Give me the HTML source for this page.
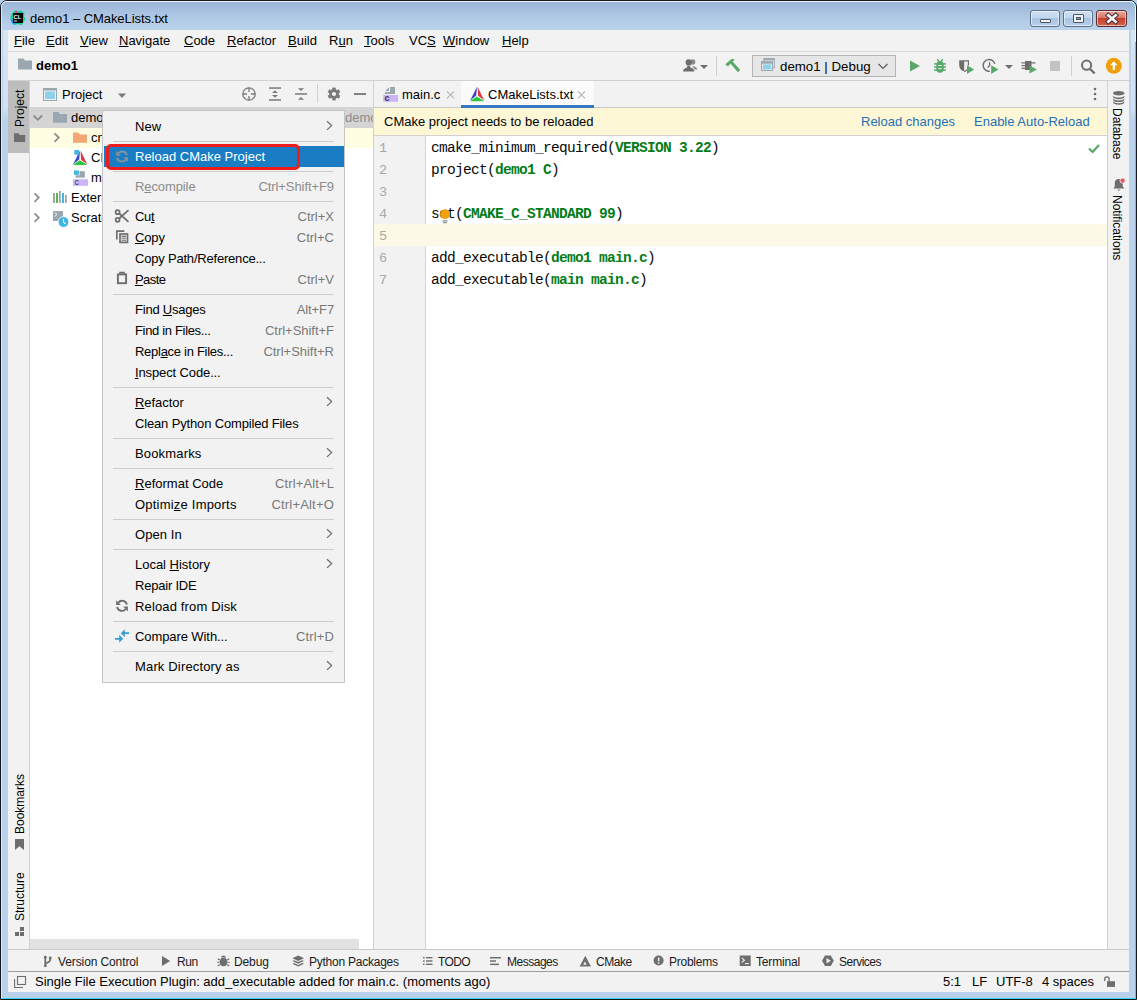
<!DOCTYPE html>
<html><head><meta charset="utf-8"><title>demo1 – CMakeLists.txt</title>
<style>
*{box-sizing:border-box;margin:0;padding:0}
html,body{width:1137px;height:1000px;overflow:hidden;background:#b9d1ea}
body{font-family:"Liberation Sans",sans-serif;font-size:13px;color:#000;position:relative}
.abs{position:absolute}
.t{position:absolute;white-space:nowrap;line-height:1}
u{text-decoration:underline;text-underline-offset:1px}
/* window frame */
#frame{position:absolute;left:0;top:0;width:1137px;height:1000px;border-radius:7px 7px 0 0;background:linear-gradient(#99b5d6 0,#a9c3e1 12px,#b8cfe9 24px,#bbd2ec 30px,#b9d1ea 100%);border:1px solid #15181d}
#frame:before{content:"";position:absolute;left:0;top:0;right:0;bottom:0;border:1px solid #35d6f7;border-top-color:#eef4fb;border-left-color:#dbe8f6;border-radius:6px 6px 0 0}
#frame:after{content:"";position:absolute;left:1px;top:1px;right:0;height:40px;border-right:1px solid #eef4fb;border-radius:0 6px 0 0}
.fl{position:absolute;top:30px;height:92px;background:linear-gradient(#d6e4f4,#d0e0f2 85%,#b9d1ea)}
#client{position:absolute;left:8px;top:30px;width:1121px;height:962px;background:#f2f2f2}
.mi{position:absolute;top:3px;font-size:13px;line-height:15px}
.hl{position:absolute;background:#d1d1d1}
/* context menu */
#menu{position:absolute;left:102px;top:110px;width:243px;height:573px;background:#f2f2f2;border:1px solid #c4c4c4;font-size:13px}
#menu .it{position:absolute;left:1px;width:240px;height:21px;line-height:21px}
#menu .it .l{position:absolute;left:31px;top:0;white-space:nowrap}
#menu .it .s{position:absolute;right:10px;top:0;color:#787878;white-space:nowrap}
#menu .sep{position:absolute;left:10px;width:221px;height:1px;background:#cdcdcd}
#menu .arr{position:absolute;right:10px;top:5px}
.code{position:absolute;left:431px;margin-top:1px;font-family:"Liberation Mono",monospace;font-size:14.5px;letter-spacing:-0.7px;line-height:22px;white-space:pre;color:#080808}
.code b{color:#067d17;font-weight:bold}
.ln{position:absolute;left:379px;margin-top:2px;font-family:"Liberation Mono",monospace;font-size:13.5px;line-height:22px;color:#a8a8a8}
.tree{position:absolute;font-size:13px;line-height:20px;white-space:nowrap}
.bt{position:absolute;top:955px;font-size:12px;line-height:14px;white-space:nowrap;color:#1a1a1a}
.vt{position:absolute;font-size:12px;line-height:14px;white-space:nowrap;transform-origin:0 0}
.wb{border:1px solid #5b6f8c;border-radius:3px;background:linear-gradient(#cfdff2 0,#c2d6ee 45%,#a9c3e3 50%,#b8cfea 100%);box-shadow:inset 0 0 0 1px rgba(255,255,255,.55)}
.wc{border-color:#5c2b2b;background:linear-gradient(#e9a99b 0,#d9776a 45%,#c4402f 50%,#d2654f 100%)}
</style></head><body>
<div id="frame"></div>
<div class="fl" style="left:3px;width:5px"></div><div class="fl" style="left:1131px;width:4px"></div>
<!-- title -->
<div class="t" style="left:30px;top:12px;font-size:13px;letter-spacing:-0.07px">demo1 – CMakeLists.txt</div>
<div id="client"></div>
<!-- menubar -->
<div class="abs" style="left:8px;top:30px;width:1121px;height:21px">
<span class="mi" style="left:6px"><u>F</u>ile</span>
<span class="mi" style="left:38px"><u>E</u>dit</span>
<span class="mi" style="left:72px"><u>V</u>iew</span>
<span class="mi" style="left:111px"><u>N</u>avigate</span>
<span class="mi" style="left:176px"><u>C</u>ode</span>
<span class="mi" style="left:219px"><u>R</u>efactor</span>
<span class="mi" style="left:280px"><u>B</u>uild</span>
<span class="mi" style="left:321px">R<u>u</u>n</span>
<span class="mi" style="left:356px"><u>T</u>ools</span>
<span class="mi" style="left:401px">VC<u>S</u></span>
<span class="mi" style="left:435px"><u>W</u>indow</span>
<span class="mi" style="left:494px"><u>H</u>elp</span>
</div>
<div class="hl" style="left:8px;top:51px;width:1121px;height:1px;background:#d9d9d9"></div>
<!-- navbar -->
<div class="t" style="left:36px;top:59px;font-size:13px;font-weight:bold">demo1</div>
<div class="hl" style="left:8px;top:80px;width:1121px;height:1px"></div>

<!-- app icon -->
<svg class="abs" style="left:9px;top:9px" width="18" height="18" viewBox="0 0 18 18">
<defs><linearGradient id="cl1" x1="0" y1="0" x2="1" y2="1"><stop offset="0" stop-color="#21d789"/><stop offset=".5" stop-color="#10c9a0"/><stop offset="1" stop-color="#009ae5"/></linearGradient></defs>
<path d="M2 5 L6 1.5 L9 2 L12 1.5 L15.5 4 L15 8 L16.5 10 L14 13 L13 16 L9 15 L5 16 L2.5 13.5 L1.3 9 Z" fill="url(#cl1)"/>
<path d="M6.3 1.3 L8.6 2.4 L7 5 Z" fill="#ed358c"/>
<path d="M1.3 9 L3 14 L6 16 L7 12 Z" fill="#1ea0ee"/>
<path d="M10 13 L15.5 8 L16.5 10 L14 13 L13 16 L9.5 15.5Z" fill="#14e07a"/>
<rect x="4" y="4" width="10" height="10" fill="#000"/>
<text x="4.6" y="9.6" font-family="Liberation Sans,sans-serif" font-size="5.8" font-weight="bold" fill="#fff">CL</text>
<rect x="5" y="11.6" width="3.2" height="0.9" fill="#fff"/>
</svg>
<!-- window buttons -->
<div class="abs wb" style="left:1030px;top:10px;width:30px;height:17px"></div>
<div class="abs wb" style="left:1063px;top:10px;width:30px;height:17px"></div>
<div class="abs wb wc" style="left:1096px;top:10px;width:31px;height:17px"></div>
<div class="abs" style="left:1040px;top:19px;width:11px;height:4px;background:#f4f4f4;border:1px solid #4a5568;border-radius:1px"></div>
<div class="abs" style="left:1073px;top:14px;width:11px;height:9px;background:#f4f4f4;border:1px solid #4a5568;border-radius:1px"></div>
<div class="abs" style="left:1076px;top:17px;width:5px;height:3px;background:#7b9bc4;border:1px solid #4a5568"></div>
<svg class="abs" style="left:1104px;top:12px" width="16" height="13" viewBox="0 0 16 13"><path d="M4.300 3.300L11.700 9.700M11.700 3.300L4.300 9.700" stroke="#47313a" stroke-width="4.600" stroke-linecap="square"/><path d="M4.300 3.300L11.700 9.700M11.700 3.300L4.300 9.700" stroke="#f4f4f4" stroke-width="2.600" stroke-linecap="square"/></svg>
<!-- nav folder -->
<svg class="abs" style="left:17px;top:58px" width="16" height="12" viewBox="0 0 16 12"><path d="M1 0.5h5.5l1.5 2h7v9H1z" fill="#9aa7b0"/></svg>
<!-- toolbar icons -->
<svg class="abs" style="left:680px;top:54px" width="448" height="24" viewBox="680 54 448 24">
<!-- user -->
<g fill="#6e6e6e"><circle cx="692.600" cy="62" r="2.700" opacity=".8"/><path d="M692 66.300q5 .200 5.300 3.200l-2.500 0z" opacity=".8"/><circle cx="688.700" cy="62.400" r="3.100"/><path d="M683 71.600q0-2.600 3.300-3.800l1-.500v-1.500h2.800v1.500l1 .500q3.300 1.200 3.300 3.800z"/></g>
<path d="M700 65h8l-4 4z" fill="#6e6e6e"/>
<rect x="716" y="56" width="1" height="20" fill="#cfcfcf"/>
<!-- hammer -->
<g fill="#59a869"><path d="M725.300 64.300l6.200-5.300l3.300.200l-1.300 1.600l-5.700 5.700z"/><path d="M730.300 63.300l2.100-2.100l7.800 8.900l-2.300 2.200z"/></g>
<!-- combo -->
<rect x="752.5" y="55.5" width="143" height="21" fill="#e6e6e6" stroke="#b4b4b4"/>
<rect x="764" y="58.800" width="10.300" height="9" fill="#e6e6e6" stroke="#9aa7b0"/><rect x="763.500" y="58.300" width="11.300" height="2" fill="#9aa7b0"/>
<rect x="761.500" y="61.800" width="11" height="8.700" fill="#e6e6e6" stroke="#9aa7b0"/><rect x="761" y="61.300" width="12" height="2.400" fill="#9aa7b0"/><rect x="763" y="64.500" width="8" height="4.800" fill="#8fd0ea"/>
<text x="780" y="70.5" font-family="Liberation Sans,sans-serif" font-size="13.3" fill="#000">demo1 | Debug</text>
<path d="M878.5 64 l4.5 4.5 l4.5-4.5" fill="none" stroke="#5a5a5a" stroke-width="1.2"/>
<!-- run -->
<path d="M910 60.5 v11 l10-5.5z" fill="#59a869"/>
<!-- debug bug -->
<g fill="#59a869"><path d="M936.300 65q0-4 3.700-4t3.700 4v4q0 3.800-3.700 3.800t-3.700-3.800z"/><rect x="934" y="63.200" width="12" height="1.400"/><rect x="934" y="66.300" width="12" height="1.400"/><rect x="934" y="69.400" width="12" height="1.400"/>
<path d="M937.200 59.200l1.800 2.300M942.800 59.200l-1.800 2.300" stroke="#59a869" stroke-width="1.400" fill="none"/></g>
<g fill="#f2f2f2"><rect x="938.200" y="65" width="3.600" height="1"/><rect x="938.200" y="68.100" width="3.600" height="1"/></g>
<!-- coverage -->
<path d="M959.200 60.300h5v11.300q-5-1.700-5-6.600z" fill="#6e6e6e"/><path d="M964 60.900h4.400v4.500" fill="none" stroke="#6e6e6e" stroke-width="1.200"/><path d="M964.200 71.600q2-.600 3-2" fill="none" stroke="#6e6e6e" stroke-width="1.200"/>
<path d="M967 65.300v8.600l7.200-4.300z" fill="#59a869"/>
<!-- profiler -->
<path d="M989.800 71.200a5.900 5.900 0 1 1 5-7.300" fill="none" stroke="#6e6e6e" stroke-width="1.400"/><path d="M989.600 62.300v3.200l-1.900 2.200" fill="none" stroke="#6e6e6e" stroke-width="1.300"/>
<path d="M991.200 65.300v8.600l7.200-4.300z" fill="#59a869"/>
<path d="M1005 65h8l-4 4z" fill="#6e6e6e"/>
<!-- valgrind-ish -->
<g fill="#6e6e6e"><rect x="1025" y="61" width="6.500" height="9"/><rect x="1021.500" y="62.300" width="4" height="1.200"/><rect x="1021.500" y="65" width="4" height="1.200"/><rect x="1021.500" y="67.700" width="4" height="1.200"/><rect x="1031" y="62.300" width="4.500" height="1.200"/></g>
<path d="M1029.500 65.500 v8 l7.500-4z" fill="#59a869"/>
<!-- stop -->
<rect x="1050" y="61" width="10" height="10" fill="#c2c2c2"/>
<rect x="1071" y="56" width="1" height="20" fill="#cfcfcf"/>
<!-- search -->
<circle cx="1086.600" cy="65.200" r="4.600" fill="none" stroke="#6e6e6e" stroke-width="2"/><path d="M1089.900 68.700 l4.700 4.700" stroke="#6e6e6e" stroke-width="2.300"/>
<!-- update -->
<circle cx="1113.800" cy="65.800" r="8" fill="#f0a00c"/><path d="M1113.800 61.300 l3.700 4 h-2.600 v4.700 h-2.200 v-4.700 h-2.600z" fill="#fff"/>
</svg>

<!-- left stripe -->
<div class="abs" style="left:8px;top:81px;width:21px;height:868px;background:#f2f2f2"></div>
<div class="abs" style="left:8px;top:81px;width:21px;height:72px;background:#bdbdbd"></div>
<div class="hl" style="left:29px;top:81px;width:1px;height:868px"></div>

<div class="vt" style="left:13px;top:127px;transform:rotate(-90deg)">Project</div>
<div class="vt" style="left:13px;top:834px;transform:rotate(-90deg)">Bookmarks</div>
<div class="vt" style="left:13px;top:921px;transform:rotate(-90deg)">Structure</div>
<svg class="abs" style="left:8px;top:81px" width="21" height="869" viewBox="8 81 21 869">
<path d="M14 133.200h4.500l1.300 1.800h5.400v7H14z" fill="#6e6e6e"/>
<path d="M15 839h9v11l-4.500-3.800l-4.500 3.800z" fill="#6e6e6e"/>
<g fill="#6e6e6e"><rect x="20" y="927" width="4" height="4"/><rect x="15" y="932" width="4" height="4"/><rect x="20" y="932" width="4" height="4"/></g>
</svg>
<div class="vt" style="left:1124px;top:108px;transform:rotate(90deg)">Database</div>
<div class="vt" style="left:1124px;top:195px;transform:rotate(90deg)">Notifications</div>
<svg class="abs" style="left:1108px;top:81px" width="21" height="200" viewBox="1108 81 21 200">
<g fill="#6e6e6e"><ellipse cx="1118.700" cy="93.200" rx="5.600" ry="2.300"/><path d="M1113.100 95.300v1.600a5.600 2.300 0 0 0 11.200 0v-1.600a5.600 2.300 0 0 1-11.200 0zM1113.100 98.200v1.600a5.600 2.300 0 0 0 11.200 0v-1.600a5.600 2.300 0 0 1-11.200 0zM1113.100 101.100v-.1v0a5.600 2.300 0 0 0 11.200 0a5.600 2.300 0 0 1-11.200 0z"/><path d="M1113.100 99.500v1.500a5.600 2.200 0 0 0 11.200 0v-1.500a5.600 2.200 0 0 1-11.200 0z" transform="translate(0 1.500)"/></g>
<path d="M1113.300 188.500l1.500-2v-3.500a4 4 0 0 1 8 0v3.500l1.500 2zM1117.300 189.500h3l-1.500 1.600z" fill="#6e6e6e"/>
<circle cx="1122.600" cy="180.600" r="2.600" fill="#e55765" stroke="#f2f2f2" stroke-width=".8"/>
</svg>

<!-- project panel -->
<div class="abs" style="left:30px;top:81px;width:343px;height:26px;background:#f2f2f2"></div>
<div class="t" style="left:62px;top:88px;font-size:13px">Project</div>
<div class="abs" style="left:30px;top:107px;width:343px;height:842px;background:#fff"></div>
<div class="abs" style="left:30px;top:107px;width:343px;height:21px;background:#d4d4d4"></div>
<div class="abs" style="left:30px;top:128px;width:343px;height:20px;background:#fffde2"></div>
<div class="abs" style="left:30px;top:939px;width:329px;height:10px;background:#e2e2e2"></div>
<div class="tree" style="left:71px;top:108px">demo1</div>
<div class="tree" style="left:345px;top:108px;color:#8c8c8c">demo1</div>
<div class="tree" style="left:91px;top:128px">cmake-build-debug</div>
<div class="tree" style="left:91px;top:148px">CMakeLists.txt</div>
<div class="tree" style="left:91px;top:168px">main.c</div>
<div class="tree" style="left:71px;top:188px">External Libraries</div>
<div class="tree" style="left:71px;top:208px">Scratches and Consoles</div>

<svg class="abs" style="left:30px;top:81px" width="343" height="150" viewBox="30 81 343 150">
<!-- header icons -->
<rect x="43.500" y="88.500" width="13" height="12" fill="#f2f2f2" stroke="#9aa7b0"/><rect x="43" y="88" width="14" height="2.500" fill="#9aa7b0"/><rect x="45" y="91.500" width="10" height="7.500" fill="#8fd0ea"/>
<path d="M118 93.500h8l-4 4.500z" fill="#7a7a7a"/>
<g stroke="#7a7a7a" fill="none" stroke-width="1.300"><circle cx="249" cy="94" r="6.200"/><path d="M249 87.800v4.200M249 96v4.200M242.800 94h4.200M251 94h4.200"/></g>
<g fill="#7a7a7a"><rect x="269" y="87.300" width="12" height="1.500"/><rect x="269" y="99.200" width="12" height="1.500"/><path d="M272 93l3-2.800l3 2.800zM272 95l3 2.800l3-2.800z"/>
<rect x="295" y="93.200" width="12" height="1.500"/><path d="M298 88.300h6l-3 2.800zM298 99.700h6l-3-2.800z"/>
<rect x="317" y="84" width="1" height="19" fill="#cfcfcf"/>
<rect x="354" y="93.100" width="12" height="1.900"/></g>
<g transform="translate(334 94)"><g fill="#7a7a7a"><circle r="4.900"/><g id="gt"><rect x="-1.700" y="-6.400" width="3.400" height="3"/><rect x="-1.700" y="3.400" width="3.400" height="3"/></g><use href="#gt" transform="rotate(60)"/><use href="#gt" transform="rotate(120)"/></g><circle r="2.100" fill="#f2f2f2"/></g>
<!-- row1 -->
<path d="M33.500 115.500l4.300 4.300l4.300-4.300" fill="none" stroke="#8c8c8c" stroke-width="1.800"/>
<path d="M53 112h5.300l1.600 2h7.100v8.800H53z" fill="#9aa7b0"/>
<!-- row2 -->
<path d="M54.500 133.300l4.300 4.300l-4.300 4.300" fill="none" stroke="#8c8c8c" stroke-width="1.700"/>
<path d="M73 132.500h5.300l1.600 2h7.100v8.300H73z" fill="#f4a674"/>
<!-- row3 cmake -->
<path d="M80 150.400l-.800 9.100l-6.200 5z" fill="#3c46c8"/><path d="M80.600 150.400l6.700 14l-6.300-4.700z" fill="#dc3c46"/><path d="M73 165l6.800-4.700l7.500 4.700z" fill="#28c83c"/>
<rect x="74.300" y="150" width="4.700" height="4.700" fill="#40b6e0"/>
<!-- row4 c file -->
<rect x="75.500" y="171.200" width="9.300" height="6.500" fill="#9aa7b0"/><rect x="73.500" y="169.900" width="6" height="5.400" fill="#fff"/><rect x="74" y="170.400" width="4.900" height="4.400" fill="#40b6e0"/><rect x="73" y="179.200" width="15" height="6.600" fill="#cdb5f5"/>
<text x="74.800" y="185.100" font-family="Liberation Sans,sans-serif" font-size="8.500" fill="#40364a">c</text>
<!-- row5 -->
<path d="M34.500 193.300l4.300 4.300l-4.300 4.300" fill="none" stroke="#8c8c8c" stroke-width="1.700"/>
<g><rect x="53" y="193" width="2" height="10" fill="#9aa7b0"/><rect x="56" y="193" width="2" height="10" fill="#62b543"/><rect x="59" y="191" width="1.800" height="12" fill="#9aa7b0"/><rect x="62" y="193" width="2" height="10" fill="#40b6e0"/><rect x="65" y="195" width="1.800" height="8" fill="#9aa7b0"/></g>
<!-- row6 -->
<path d="M34.500 213.300l4.300 4.300l-4.300 4.300" fill="none" stroke="#8c8c8c" stroke-width="1.700"/>
<path d="M53 211h10v5.500l-4 4.500h-6z" fill="#9aa7b0"/><path d="M54.500 212.500l2.500 2l-2.500 2" fill="none" stroke="#f2f2f2" stroke-width="1"/>
<circle cx="63.500" cy="222" r="5.400" fill="#40b6e0" stroke="#fff" stroke-width=".8"/><path d="M63.500 218.800v3.400l2 1.500" fill="none" stroke="#fff" stroke-width="1.100"/>
</svg>

<div class="hl" style="left:373px;top:81px;width:1px;height:868px"></div>
<!-- editor -->
<div class="abs" style="left:374px;top:81px;width:734px;height:26px;background:#f2f2f2"></div>
<div class="abs" style="left:461px;top:81px;width:133px;height:26px;background:#fbfbfb"></div>
<div class="hl" style="left:374px;top:107px;width:734px;height:1px;background:#c9c9c9"></div>
<div class="abs" style="left:461px;top:105px;width:133px;height:3px;background:#3778c3"></div>
<div class="t" style="left:402px;top:88px;font-size:13px">main.c</div>
<div class="t" style="left:488px;top:88px;font-size:13px">CMakeLists.txt</div>
<!-- banner -->
<div class="abs" style="left:374px;top:108px;width:734px;height:27px;background:#fef7d6"></div>
<div class="hl" style="left:374px;top:135px;width:734px;height:1px"></div>
<div class="t" style="left:384px;top:115px;font-size:13px">CMake project needs to be reloaded</div>
<div class="t" style="left:861px;top:115px;font-size:13px;color:#2470b3">Reload changes</div>
<div class="t" style="left:974px;top:115px;font-size:13px;color:#2470b3">Enable Auto-Reload</div>
<!-- editor body -->
<div class="abs" style="left:374px;top:136px;width:734px;height:813px;background:#fff"></div>
<div class="abs" style="left:374px;top:136px;width:52px;height:813px;background:#f2f2f2"></div>
<div class="hl" style="left:425px;top:136px;width:1px;height:813px;background:#d4d4d4"></div>
<div class="abs" style="left:374px;top:224px;width:733px;height:22px;background:#fcfae6"></div>
<div class="hl" style="left:1107px;top:81px;width:1px;height:868px"></div>
<div class="ln" style="top:136px">1</div><div class="ln" style="top:158px">2</div><div class="ln" style="top:180px">3</div><div class="ln" style="top:202px">4</div><div class="ln" style="top:224px">5</div><div class="ln" style="top:246px">6</div><div class="ln" style="top:268px">7</div>
<div class="code" style="top:136px">cmake_minimum_required(<b>VERSION 3.22</b>)</div>
<div class="code" style="top:158px">project(<b>demo1 C</b>)</div>
<div class="code" style="top:202px">set(<b>CMAKE_C_STANDARD 99</b>)</div>
<div class="code" style="top:246px">add_executable(<b>demo1 main.c</b>)</div>
<div class="code" style="top:268px">add_executable(<b>main main.c</b>)</div>

<svg class="abs" style="left:374px;top:81px" width="734" height="150" viewBox="374 81 734 150">
<!-- main.c icon -->
<path d="M390 87h5v6.900h-10v-1.900h5z" fill="#9aa7b0"/><path d="M389 87.200v3.800h-3.800z" fill="#9aa7b0"/><rect x="383.200" y="95" width="14.800" height="6.800" fill="#cdb5f5"/>
<text x="384.600" y="101" font-family="Liberation Sans,sans-serif" font-size="9" font-weight="bold" fill="#40364a">c</text>
<path d="M447 91.300l7 7M454 91.300l-7 7" stroke="#b4b4b4" stroke-width="1.100"/>
<!-- cmake icon -->
<path d="M477 86.800l-.800 8.700l-6.200 5.200z" fill="#3c46c8"/><path d="M477.600 86.800l6.700 13.700l-6.300-4.700z" fill="#dc3c46"/><path d="M470 101.200l6.800-4.700l7.500 4.700z" fill="#28c83c"/>
<path d="M578 91.300l7 7M585 91.300l-7 7" stroke="#b4b4b4" stroke-width="1.100"/>
<!-- dots -->
<g fill="#6e6e6e"><circle cx="1095" cy="89" r="1.300"/><circle cx="1095" cy="94" r="1.300"/><circle cx="1095" cy="99" r="1.300"/></g>
<!-- check -->
<path d="M1089 148.500l3.600 3.500l6.400-7" fill="none" stroke="#59a869" stroke-width="2.200"/>
<!-- bulb -->
<circle cx="445" cy="214.200" r="4.900" fill="#f0a00c"/><rect x="442.300" y="220.400" width="5.400" height="1" fill="#7a7a7a"/><rect x="443" y="222.200" width="4" height="1" fill="#7a7a7a"/>
</svg>

<!-- right stripe -->
<!-- bottom bars -->
<div class="hl" style="left:8px;top:949px;width:1121px;height:1px;background:#c9c9c9"></div>
<div class="abs" style="left:8px;top:950px;width:1121px;height:21px;background:#f2f2f2"></div>
<div class="hl" style="left:8px;top:971px;width:1121px;height:1px;background:#9c9c9c"></div>
<div class="abs" style="left:8px;top:972px;width:1121px;height:20px;background:#f2f2f2"></div>
<div class="bt" style="letter-spacing:-0.110px;left:58px">Version Control</div>
<div class="bt" style="letter-spacing:-0.472px;left:177px">Run</div>
<div class="bt" style="letter-spacing:-0.115px;left:234px">Debug</div>
<div class="bt" style="letter-spacing:-0.240px;left:309px">Python Packages</div>
<div class="bt" style="letter-spacing:-0.613px;left:438px">TODO</div>
<div class="bt" style="letter-spacing:-0.488px;left:507px">Messages</div>
<div class="bt" style="letter-spacing:-0.443px;left:596px">CMake</div>
<div class="bt" style="letter-spacing:-0.248px;left:669px">Problems</div>
<div class="bt" style="letter-spacing:-0.170px;left:756px">Terminal</div>
<div class="bt" style="letter-spacing:-0.502px;left:839px">Services</div>
<div class="t" style="left:35px;top:975px;font-size:13px">Single File Execution Plugin: add_executable added for main.c. (moments ago)</div>
<div class="t" style="left:943px;top:975px;font-size:13px">5:1</div>
<div class="t" style="left:972px;top:975px;font-size:13px">LF</div>
<div class="t" style="left:996px;top:975px;font-size:13px">UTF-8</div>
<div class="t" style="left:1042px;top:975px;font-size:13px">4 spaces</div>

<svg class="abs" style="left:8px;top:951px" width="1121" height="41" viewBox="8 951 1121 41">
<!-- vcs -->
<g fill="none" stroke="#6e6e6e" stroke-width="1.800"><path d="M45.300 957v9"/><path d="M50.200 958v1.500q0 2.500-4.900 4"/></g><g fill="#6e6e6e"><circle cx="45.300" cy="957.200" r="1.400"/><circle cx="45.300" cy="965.800" r="1.400"/><circle cx="50.200" cy="958" r="1.400"/></g>
<!-- run -->
<path d="M162 956v10l8.200-5z" fill="#6e6e6e"/>
<!-- debug -->
<g fill="#6e6e6e"><ellipse cx="223.500" cy="962" rx="3.700" ry="4.300"/><path d="M221 957.600q.3-2 2.500-2t2.500 2z"/><path d="M220 960l-2.300-1.300M227 960l2.300-1.300M219.700 962.300h-2.500M227.300 962.300h2.500M220 964.500l-2.300 1.500M227 964.500l2.300 1.500" stroke="#6e6e6e" stroke-width="1.100"/></g>
<!-- python packages -->
<g fill="#6e6e6e"><path d="M298.200 955.500l5.800 2.700l-5.800 2.700l-5.800-2.700z"/><path d="M292.400 961l1.700-.8l4.100 1.900l4.100-1.900l1.700.8l-5.800 2.700z"/><path d="M292.400 963.800l1.700-.8l4.100 1.900l4.100-1.900l1.700.8l-5.800 2.700z"/></g>
<!-- todo -->
<g fill="#6e6e6e"><rect x="423" y="957" width="1.600" height="1.400"/><rect x="426" y="957" width="6.500" height="1.400"/><rect x="423" y="960.300" width="1.600" height="1.400"/><rect x="426" y="960.300" width="6.500" height="1.400"/><rect x="423" y="963.600" width="1.600" height="1.400"/><rect x="426" y="963.600" width="6.500" height="1.400"/></g>
<!-- messages -->
<g fill="#6e6e6e"><rect x="490" y="957" width="11" height="1.500"/><rect x="490" y="960.300" width="6" height="1.500"/><rect x="490" y="963.600" width="9" height="1.500"/></g>
<!-- cmake -->
<path d="M585.300 955.800l5.700 10.800h-11.400zM584.900 961.600l-1.700 3.200h3.400z" fill="#6e6e6e" fill-rule="evenodd"/>
<!-- problems -->
<circle cx="658.600" cy="960.500" r="5" fill="#6e6e6e"/><rect x="657.900" y="957.500" width="1.500" height="3.700" fill="#f2f2f2"/><rect x="657.900" y="962.200" width="1.500" height="1.500" fill="#f2f2f2"/>
<!-- terminal -->
<rect x="739.700" y="955.500" width="11" height="10.500" fill="#6e6e6e"/><path d="M741.800 958l2.600 2.200l-2.600 2.200" fill="none" stroke="#f2f2f2" stroke-width="1.100"/><rect x="745" y="963" width="3.800" height="1.100" fill="#f2f2f2"/>
<!-- services -->
<path d="M825 955.500h5.800l3 5.300l-3 5.300h-5.800l-3-5.300z" fill="#6e6e6e"/><path d="M826.500 958v5.600l4.300-2.800z" fill="#f2f2f2"/>
<!-- status icon -->
<g fill="none" stroke="#6e6e6e" stroke-width="1.100"><rect x="17.500" y="976.500" width="8" height="8"/><path d="M14.600 979v8.500h8.400"/></g>
<!-- lock -->
<rect x="1107" y="981.200" width="8" height="5.700" fill="#6e6e6e"/><path d="M1104.700 981v-2a2.200 2.200 0 0 1 4.400 0v2.300" fill="none" stroke="#6e6e6e" stroke-width="1.300"/>
</svg>

<!-- context menu -->
<div id="menu">
<div class="it" style="top:5px"><span class="l" style="letter-spacing:0.128px;">New</span></div>
<div class="sep" style="top:30px"></div>
<div class="it" style="top:35px;background:#1a7dc4;color:#fff"><span class="l" style="letter-spacing:-0.003px;">Reload CMake Project</span></div>
<div class="sep" style="top:60px"></div>
<div class="it" style="top:65px;color:#8c8c8c"><span class="l" style="letter-spacing:-0.102px;">R<u>e</u>compile</span><span class="s" style="letter-spacing:-0.076px;color:#8c8c8c">Ctrl+Shift+F9</span></div>
<div class="sep" style="top:90px"></div>
<div class="it" style="top:95px"><span class="l" style="letter-spacing:-0.283px;">Cu<u>t</u></span><span class="s" style="letter-spacing:0.003px;">Ctrl+X</span></div>
<div class="it" style="top:116px"><span class="l" style="letter-spacing:-0.140px;"><u>C</u>opy</span><span class="s" style="letter-spacing:-0.001px;">Ctrl+C</span></div>
<div class="it" style="top:137px"><span class="l" style="letter-spacing:-0.202px;">Copy Path/Reference...</span></div>
<div class="it" style="top:158px"><span class="l" style="letter-spacing:-0.570px;"><u>P</u>aste</span><span class="s" style="letter-spacing:0.003px;">Ctrl+V</span></div>
<div class="sep" style="top:183px"></div>
<div class="it" style="top:188px"><span class="l" style="letter-spacing:-0.227px;">Find <u>U</u>sages</span><span class="s" style="letter-spacing:-0.123px;">Alt+F7</span></div>
<div class="it" style="top:209px"><span class="l" style="letter-spacing:-0.333px;">Find in Files...</span><span class="s" style="letter-spacing:-0.030px;">Ctrl+Shift+F</span></div>
<div class="it" style="top:230px"><span class="l" style="letter-spacing:-0.281px;">Repl<u>a</u>ce in Files...</span><span class="s" style="letter-spacing:-0.018px;">Ctrl+Shift+R</span></div>
<div class="it" style="top:251px"><span class="l" style="letter-spacing:-0.124px;"><u>I</u>nspect Code...</span></div>
<div class="sep" style="top:276px"></div>
<div class="it" style="top:281px"><span class="l" style="letter-spacing:-0.043px;"><u>R</u>efactor</span></div>
<div class="it" style="top:302px"><span class="l" style="letter-spacing:-0.153px;">Clean Python Compiled Files</span></div>
<div class="sep" style="top:327px"></div>
<div class="it" style="top:332px"><span class="l" style="letter-spacing:0.163px;">Bookmarks</span></div>
<div class="sep" style="top:357px"></div>
<div class="it" style="top:362px"><span class="l" style="letter-spacing:0.011px;"><u>R</u>eformat Code</span><span class="s" style="letter-spacing:0.119px;">Ctrl+Alt+L</span></div>
<div class="it" style="top:383px"><span class="l" style="letter-spacing:0.209px;">Optimi<u>z</u>e Imports</span><span class="s" style="letter-spacing:0.191px;">Ctrl+Alt+O</span></div>
<div class="sep" style="top:408px"></div>
<div class="it" style="top:413px"><span class="l" style="letter-spacing:0.076px;">Open In</span></div>
<div class="sep" style="top:438px"></div>
<div class="it" style="top:443px"><span class="l" style="letter-spacing:-0.020px;">Local <u>H</u>istory</span></div>
<div class="it" style="top:464px"><span class="l" style="letter-spacing:-0.208px;">Repair IDE</span></div>
<div class="it" style="top:485px"><span class="l" style="letter-spacing:0.144px;">Reload from Disk</span></div>
<div class="sep" style="top:510px"></div>
<div class="it" style="top:515px"><span class="l" style="letter-spacing:-0.088px;">Compare With...</span><span class="s" style="letter-spacing:0.133px;">Ctrl+D</span></div>
<div class="sep" style="top:540px"></div>
<div class="it" style="top:545px"><span class="l" style="letter-spacing:0.161px;">Mark Directory as</span></div>

<svg class="abs" style="left:0;top:0" width="241" height="572" viewBox="103 111 241 572">
<g fill="none" stroke="#6e6e6e" stroke-width="1.300">
<path d="M327 121.300l4.600 4.300l-4.600 4.300"/><path d="M327 397.300l4.600 4.300l-4.600 4.300"/><path d="M327 448.300l4.600 4.300l-4.600 4.300"/><path d="M327 529.300l4.600 4.300l-4.600 4.300"/><path d="M327 559.300l4.600 4.300l-4.600 4.300"/><path d="M327 661.300l4.600 4.300l-4.600 4.300"/>
</g>
<!-- reload (selected) -->
<g fill="none" stroke="#86929a" stroke-width="1.900"><path d="M126.900 155.3 A4.900 4.900 0 0 0 118.300 153.3"/><path d="M117.100 157.7 A4.900 4.900 0 0 0 125.700 159.7"/></g><g fill="#86929a"><path d="M116.100 150.9V155.7H120.800z"/><path d="M127.900 162.1V157.3H123.200z"/></g>
<!-- scissors -->
<g fill="none" stroke="#6e6e6e" stroke-width="1.700"><circle cx="117.600" cy="212.200" r="2"/><circle cx="117.600" cy="219.800" r="2"/><path d="M119.200 213.500l9.300 8.300M119.200 218.500l9.300-8.300"/></g>
<!-- copy -->
<g fill="none" stroke="#6e6e6e" stroke-width="1.700"><path d="M116.800 239.500v-8.300h7.500"/><rect x="120" y="234" width="7.500" height="8.400"/><path d="M121.500 236.400h4.500M121.500 238.300h4.500M121.500 240.200h4.500" stroke-width="1.100"/></g>
<!-- paste -->
<g fill="none" stroke="#6e6e6e" stroke-width="1.900"><rect x="117.900" y="274.400" width="8.200" height="8.800"/><path d="M120 274v-1.400h4v1.400" stroke-width="1.600"/></g>
<!-- reload from disk -->
<g fill="none" stroke="#6e6e6e" stroke-width="1.900"><path d="M126.900 604.6 A4.900 4.900 0 0 0 118.300 602.6"/><path d="M117.100 607.0 A4.900 4.900 0 0 0 125.700 609.0"/></g><g fill="#6e6e6e"><path d="M116.100 600.2V605.0H120.800z"/><path d="M127.900 611.4V606.6H123.200z"/></g>
<!-- compare -->
<g fill="#3b9cd4"><path d="M120.800 633.200l4-4v3.100h4.300v1.800h-4.300v3.100z"/><path d="M123.200 638.800l-4 4v-3.100h-4.300v-1.800h4.300v-3.100z"/></g>
</svg>

</div>
<div class="abs" style="left:106px;top:143.5px;width:194px;height:26.5px;border:3px solid #f01c1c;border-radius:5px"></div>
</body></html>
